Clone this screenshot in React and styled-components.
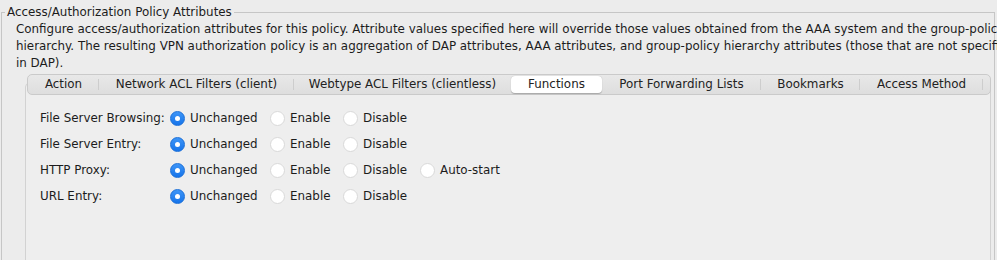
import React from 'react'
import styled, { createGlobalStyle } from 'styled-components'

const GlobalStyle = createGlobalStyle`
  html, body {
    margin: 0;
    padding: 0;
    background: #ececec;
    overflow: hidden;
  }
  body {
    font-family: 'DejaVu Sans', 'Liberation Sans', sans-serif;
    font-size: 11.9px;
    color: #1c1c1c;
  }
`

const Page = styled.div`
  width: 997px;
  height: 260px;
  overflow: hidden;
`

const Group = styled.fieldset`
  margin: 5px 0 0 1px;
  padding: 0;
  width: 992px;
  height: 300px;
  border: 1px solid #c6c6c6;
  border-bottom: none;
  min-width: 0;
`

const Title = styled.legend`
  padding: 0 2px;
  margin-left: 3px;
  line-height: 15px;
`

const Description = styled.div`
  white-space: pre;
  line-height: 17px;
  margin: 1px 0 0 14px;
`

const TabPane = styled.div`
  margin: 11px 0 0 23px;
  width: 964px;
  height: 200px;
  border: 1px solid #d2d2d2;
  border-radius: 4px;
  background: #eeeeee;
`

const TabBar = styled.div`
  display: flex;
  align-items: center;
  margin: -10px 0 0 1px;
  width: 955px;
  padding-right: 7px;
  height: 19px;
  border: 1px solid #cacaca;
  border-radius: 5px;
  background: linear-gradient(#e8e8e8, #dedede);
`

const Tab = styled.div`
  position: relative;
  flex: none;
  width: ${p => p.w}px;
  height: 17px;
  line-height: 17px;
  text-align: center;
  white-space: nowrap;
  color: #222;
  border-radius: 4px;
  background: ${p => (p.active ? '#ffffff' : 'transparent')};
  box-shadow: ${p => (p.active ? '0 0.5px 1px rgba(0,0,0,0.25)' : 'none')};
  &::after {
    content: '';
    display: ${p => (p.sep ? 'block' : 'none')};
    position: absolute;
    right: 0;
    top: 3px;
    width: 1px;
    height: 11px;
    background: #cdcdcd;
  }
`

const Rows = styled.div`
  padding: 10px 0 0 14px;
`

const Row = styled.div`
  display: grid;
  grid-template-columns: 130px 100px 73px 77px auto;
  align-items: center;
  height: 26px;
`

const Label = styled.div`
  white-space: nowrap;
`

const Option = styled.label`
  display: flex;
  align-items: center;
  gap: 5px;
  white-space: nowrap;
`

const Radio = styled.span`
  box-sizing: border-box;
  flex: none;
  width: 15px;
  height: 15px;
  border-radius: 50%;
  display: flex;
  align-items: center;
  justify-content: center;
  background: ${p => (p.checked ? 'linear-gradient(#3d95f7, #1674ea)' : '#ffffff')};
  border: 1px solid ${p => (p.checked ? '#1a6fd8' : '#d9d9d9')};
  &::after {
    content: '';
    display: ${p => (p.checked ? 'block' : 'none')};
    width: 5px;
    height: 5px;
    border-radius: 50%;
    background: #fff;
  }
`

const tabs = [
  { name: 'Action', w: 71 },
  { name: 'Network ACL Filters (client)', w: 195 },
  { name: 'Webtype ACL Filters (clientless)', w: 217 },
  { name: 'Functions', w: 91, active: true },
  { name: 'Port Forwarding Lists', w: 159 },
  { name: 'Bookmarks', w: 99 },
  { name: 'Access Method', w: 123 },
]

const rows = [
  { label: 'File Server Browsing:', options: ['Unchanged', 'Enable', 'Disable'] },
  { label: 'File Server Entry:', options: ['Unchanged', 'Enable', 'Disable'] },
  { label: 'HTTP Proxy:', options: ['Unchanged', 'Enable', 'Disable', 'Auto-start'] },
  { label: 'URL Entry:', options: ['Unchanged', 'Enable', 'Disable'] },
]

const description =
  'Configure access/authorization attributes for this policy. Attribute values specified here will override those values obtained from the AAA system and the group-policy\n' +
  'hierarchy. The resulting VPN authorization policy is an aggregation of DAP attributes, AAA attributes, and group-policy hierarchy attributes (those that are not specified\n' +
  'in DAP).'

export default function App() {
  return (
    <Page>
      <GlobalStyle />
      <Group>
        <Title>Access/Authorization Policy Attributes</Title>
        <Description>{description}</Description>
        <TabPane>
          <TabBar>
            {tabs.map((t, i) => (
              <Tab
                key={t.name}
                w={t.w}
                active={t.active}
                sep={!t.active && !(tabs[i + 1] && tabs[i + 1].active)}
              >
                {t.name}
              </Tab>
            ))}
          </TabBar>
          <Rows>
            {rows.map(r => (
              <Row key={r.label}>
                <Label>{r.label}</Label>
                {r.options.map((o, i) => (
                  <Option key={o}>
                    <Radio checked={i === 0} />
                    {o}
                  </Option>
                ))}
              </Row>
            ))}
          </Rows>
        </TabPane>
      </Group>
    </Page>
  )
}
